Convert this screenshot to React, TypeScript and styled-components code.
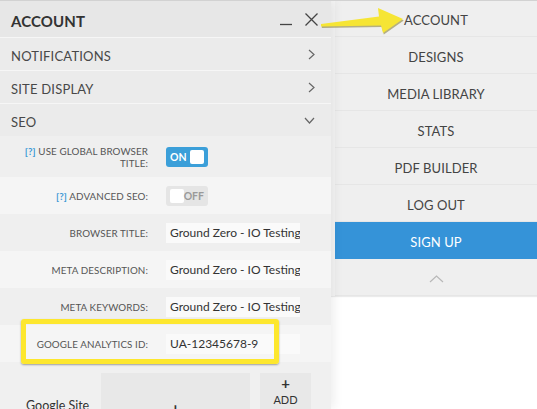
import React from "react";
import styled, { createGlobalStyle } from "styled-components";

const GlobalStyle = createGlobalStyle`
  html, body {
    margin: 0;
    padding: 0;
    background: #fff;
    overflow: hidden;
  }
  body {
    font-family: Lato, "Open Sans", sans-serif;
    color: #444;
  }
  * { box-sizing: border-box; }
`;

const Page = styled.div`
  position: relative;
  display: flex;
  height: 409px;
  border-top: 1px solid #d2d2d2;
  overflow: hidden;
`;

const Panel = styled.div`
  position: relative;
  z-index: 1;
  width: 331px;
  flex-shrink: 0;
  background: #f0f0f0;
  box-shadow: 3px 0 10px rgba(0, 0, 0, 0.07);
`;

const Header = styled.div`
  height: 36px;
  display: flex;
  align-items: center;
  justify-content: space-between;
  padding: 3px 13px 0 11px;
  background: #e7e7e7;
`;

const Title = styled.h1`
  margin: 0;
  font-size: 15px;
  font-weight: 700;
  color: #333;
  letter-spacing: 0.1px;
`;

const Controls = styled.div`
  display: flex;
  align-items: center;
  gap: 12px;
  margin-top: -3px;
`;

const SectionRow = styled.div`
  height: 33px;
  display: flex;
  align-items: center;
  justify-content: space-between;
  padding: 4px 16px 0 11px;
  border-top: 1px solid #f6f6f6;
  background: #ebebeb;
  font-size: 13px;
  color: #484848;
  letter-spacing: 0.2px;
  svg {
    margin-top: -4px;
  }
`;

const FieldRow = styled.div<{ $h?: number; $alt?: boolean }>`
  position: relative;
  height: ${(p) => p.$h ?? 37}px;
  display: grid;
  grid-template-columns: 148px 134px;
  column-gap: 18px;
  align-items: center;
  background: ${(p) => (p.$alt ? "#f5f5f5" : "#efefef")};
`;

const Label = styled.div`
  padding-left: 20px;
  text-align: right;
  font-size: 9.8px;
  line-height: 12px;
  color: #555;
  text-transform: uppercase;
  letter-spacing: 0.1px;
`;

const Help = styled.span`
  color: #3d9ad6;
  font-weight: 700;
`;

const Input = styled.div`
  height: 20px;
  display: flex;
  align-items: center;
  padding-left: 4px;
  background: #fafafa;
  font-size: 12px;
  color: #333;
  white-space: nowrap;
  overflow: hidden;
`;

const Toggle = styled.div<{ $on?: boolean }>`
  width: 42px;
  height: 20px;
  display: flex;
  align-items: center;
  justify-content: space-between;
  padding: 0 4px 0 4px;
  border-radius: 3px;
  flex-direction: ${(p) => (p.$on ? "row" : "row-reverse")};
  background: ${(p) => (p.$on ? "#3b9fd9" : "#e5e5e5")};
  color: ${(p) => (p.$on ? "#fff" : "#9a9a9a")};
  font-size: 10.5px;
  font-weight: 700;
`;

const Knob = styled.span`
  width: 14px;
  height: 14px;
  border-radius: 2px;
  background: #fff;
`;

const Highlight = styled.div`
  position: absolute;
  left: 21px;
  top: -6px;
  width: 258px;
  bottom: -2px;
  border: 5px solid #fde72e;
  border-radius: 3px;
  box-shadow: 0 1px 2px rgba(0, 0, 0, 0.35);
  pointer-events: none;
`;

const SiteRow = styled.div`
  display: flex;
  align-items: center;
  padding: 11px 0 0 26px;
`;

const SiteLabel = styled.div`
  width: 75px;
  font-size: 12.5px;
  color: #333;
  white-space: nowrap;
`;

const DropBox = styled.div`
  width: 149px;
  height: 64px;
  margin-right: 10px;
  display: flex;
  align-items: center;
  justify-content: center;
  background: #e8e8e8;
  font-size: 16px;
  font-weight: 700;
  color: #333;
  padding-top: 4px;
`;

const AddBox = styled.div`
  width: 51px;
  height: 64px;
  display: flex;
  flex-direction: column;
  align-items: center;
  gap: 4px;
  padding-top: 4px;
  background: #e8e8e8;
  color: #333;
  font-size: 11px;
  line-height: 12px;
`;

const Plus = styled.b`
  font-size: 15px;
  line-height: 13px;
`;

const Menu = styled.nav`
  flex: 1;
  align-self: flex-start;
  border-left: 4px solid #f4f4f4;
  box-shadow: 0 1px 1px rgba(0, 0, 0, 0.08);
`;

const MenuItem = styled.div<{ $primary?: boolean }>`
  height: 37px;
  display: flex;
  align-items: center;
  justify-content: center;
  padding-top: 3px;
  border-bottom: 1px solid ${(p) => (p.$primary ? "#3593d8" : "#e6e6e6")};
  background: ${(p) => (p.$primary ? "#3593d8" : "#efefef")};
  color: ${(p) => (p.$primary ? "#fff" : "#444")};
  font-size: 13px;
  letter-spacing: 0.1px;
  &:first-child {
    height: 36px;
  }
`;

const Arrow = styled.svg`
  position: absolute;
  left: 0;
  top: 0;
  z-index: 5;
  pointer-events: none;
`;

const Chevron = ({ dir }: { dir: "right" | "down" | "up" }) => {
  const d =
    dir === "right"
      ? "M1 1 L6 5.5 L1 10"
      : dir === "down"
      ? "M1 1 L5.5 6 L10 1"
      : "M1 7 L7.5 1 L14 7";
  const w = dir === "right" ? 7 : dir === "down" ? 11 : 15;
  const h = dir === "right" ? 11 : dir === "down" ? 7 : 8;
  return (
    <svg width={w} height={h} viewBox={`0 0 ${w} ${h}`}>
      <path d={d} fill="none" stroke={dir === "up" ? "#b8b8b8" : "#666"} strokeWidth="1.2" />
    </svg>
  );
};

const fields = [
  { label: "Browser title:", value: "Ground Zero - IO Testing" },
  { label: "Meta description:", value: "Ground Zero - IO Testing" },
  { label: "Meta keywords:", value: "Ground Zero - IO Testing" },
];

const menu = ["ACCOUNT", "DESIGNS", "MEDIA LIBRARY", "STATS", "PDF BUILDER", "LOG OUT"];

export default function App() {
  return (
    <>
      <GlobalStyle />
      <Page>
        <Panel>
          <Header>
            <Title>ACCOUNT</Title>
            <Controls>
              <svg width="13" height="14" viewBox="0 0 13 14">
                <path d="M0 12.5 H12" stroke="#444" strokeWidth="1.3" />
              </svg>
              <svg width="13" height="13" viewBox="0 0 13 13">
                <path d="M0.5 0.5 L12.5 12.5 M12.5 0.5 L0.5 12.5" stroke="#444" strokeWidth="1.3" />
              </svg>
            </Controls>
          </Header>
          <SectionRow>
            NOTIFICATIONS
            <Chevron dir="right" />
          </SectionRow>
          <SectionRow>
            SITE DISPLAY
            <Chevron dir="right" />
          </SectionRow>
          <SectionRow>
            SEO
            <Chevron dir="down" />
          </SectionRow>

          <FieldRow $h={41}>
            <Label>
              <Help>[?]</Help> Use global browser title:
            </Label>
            <Toggle $on>
              ON
              <Knob />
            </Toggle>
          </FieldRow>
          <FieldRow $alt>
            <Label>
              <Help>[?]</Help> Advanced SEO:
            </Label>
            <Toggle>
              OFF
              <Knob />
            </Toggle>
          </FieldRow>
          {fields.map((f, i) => (
            <FieldRow key={f.label} $alt={i % 2 === 1}>
              <Label>{f.label}</Label>
              <Input>{f.value}</Input>
            </FieldRow>
          ))}
          <FieldRow $alt>
            <Label>Google Analytics ID:</Label>
            <Input>UA-12345678-9</Input>
            <Highlight />
          </FieldRow>
          <SiteRow>
            <SiteLabel>Google Site</SiteLabel>
            <DropBox>+</DropBox>
            <AddBox>
              <Plus>+</Plus>
              ADD
            </AddBox>
          </SiteRow>
        </Panel>

        <Menu>
          {menu.map((m) => (
            <MenuItem key={m}>{m}</MenuItem>
          ))}
          <MenuItem $primary>SIGN UP</MenuItem>
          <MenuItem>
            <Chevron dir="up" />
          </MenuItem>
        </Menu>

        <Arrow width="537" height="40" viewBox="0 0 537 40">
          <polygon
            points="321,23 379,15.5 378,7 403,18 383,32 381,24.5 321,25.5"
            fill="rgba(110,100,0,0.45)"
            transform="translate(0.8 1.5)"
          />
          <polygon points="321,23 379,15.5 378,7 403,18 383,32 381,24.5 321,25.5" fill="#f6e534" />
        </Arrow>
      </Page>
    </>
  );
}
